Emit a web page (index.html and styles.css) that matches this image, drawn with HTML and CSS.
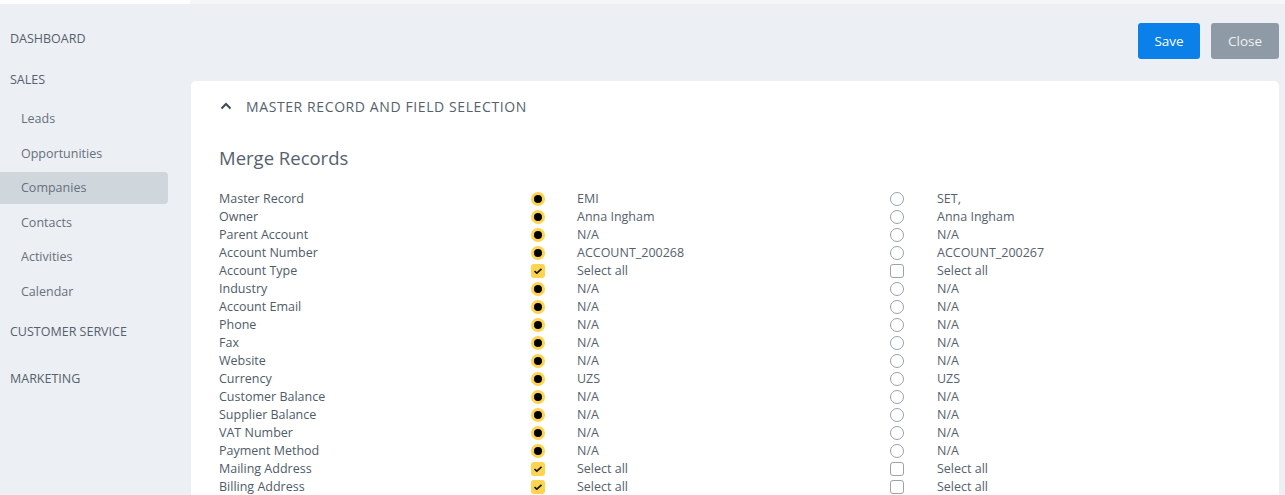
FILE: index.html
```html
<!DOCTYPE html>
<html>
<head>
<meta charset="utf-8">
<link rel="stylesheet" href="styles.css">
</head>
<body>
<div class="strip"><div class="strip-left"></div><div class="strip-right"></div></div>
<div class="layout">
  <nav class="sidebar">
    <div class="nav-head">DASHBOARD</div>
    <div class="nav-head">SALES</div>
    <div class="nav-sub">
      <div class="nav-item">Leads</div>
      <div class="nav-item">Opportunities</div>
      <div class="nav-item active">Companies</div>
      <div class="nav-item">Contacts</div>
      <div class="nav-item">Activities</div>
      <div class="nav-item">Calendar</div>
    </div>
    <div class="nav-head cs">CUSTOMER SERVICE</div>
    <div class="nav-head mk">MARKETING</div>
  </nav>
  <main class="main">
    <div class="actions">
      <button class="btn btn-save">Save</button>
      <button class="btn btn-close">Close</button>
    </div>
    <section class="card">
      <div class="section-head">
        <svg class="chev" width="12" height="8" viewBox="0 0 12 8"><path d="M1.5 6.5 L6 2 L10.5 6.5" fill="none" stroke="#3e4a57" stroke-width="2"/></svg>
        <span>MASTER RECORD AND FIELD SELECTION</span>
      </div>
      <h2 class="title">Merge Records</h2>
      <div class="grid">
        <div class="lbl">Master Record</div><div class="cell"><span class="radio on"></span></div><div class="val">EMI</div><div class="cell"><span class="radio"></span></div><div class="val">SET,</div>
        <div class="lbl">Owner</div><div class="cell"><span class="radio on"></span></div><div class="val">Anna Ingham</div><div class="cell"><span class="radio"></span></div><div class="val">Anna Ingham</div>
        <div class="lbl">Parent Account</div><div class="cell"><span class="radio on"></span></div><div class="val">N/A</div><div class="cell"><span class="radio"></span></div><div class="val">N/A</div>
        <div class="lbl">Account Number</div><div class="cell"><span class="radio on"></span></div><div class="val">ACCOUNT_200268</div><div class="cell"><span class="radio"></span></div><div class="val">ACCOUNT_200267</div>
        <div class="lbl">Account Type</div><div class="cell"><span class="check on"><svg width="10" height="8" viewBox="0 0 10 8"><path d="M1.5 4.2 L3.8 6.2 L8.5 1.8" fill="none" stroke="#111" stroke-width="1.6"/></svg></span></div><div class="val">Select all</div><div class="cell"><span class="check"></span></div><div class="val">Select all</div>
        <div class="lbl">Industry</div><div class="cell"><span class="radio on"></span></div><div class="val">N/A</div><div class="cell"><span class="radio"></span></div><div class="val">N/A</div>
        <div class="lbl">Account Email</div><div class="cell"><span class="radio on"></span></div><div class="val">N/A</div><div class="cell"><span class="radio"></span></div><div class="val">N/A</div>
        <div class="lbl">Phone</div><div class="cell"><span class="radio on"></span></div><div class="val">N/A</div><div class="cell"><span class="radio"></span></div><div class="val">N/A</div>
        <div class="lbl">Fax</div><div class="cell"><span class="radio on"></span></div><div class="val">N/A</div><div class="cell"><span class="radio"></span></div><div class="val">N/A</div>
        <div class="lbl">Website</div><div class="cell"><span class="radio on"></span></div><div class="val">N/A</div><div class="cell"><span class="radio"></span></div><div class="val">N/A</div>
        <div class="lbl">Currency</div><div class="cell"><span class="radio on"></span></div><div class="val">UZS</div><div class="cell"><span class="radio"></span></div><div class="val">UZS</div>
        <div class="lbl">Customer Balance</div><div class="cell"><span class="radio on"></span></div><div class="val">N/A</div><div class="cell"><span class="radio"></span></div><div class="val">N/A</div>
        <div class="lbl">Supplier Balance</div><div class="cell"><span class="radio on"></span></div><div class="val">N/A</div><div class="cell"><span class="radio"></span></div><div class="val">N/A</div>
        <div class="lbl">VAT Number</div><div class="cell"><span class="radio on"></span></div><div class="val">N/A</div><div class="cell"><span class="radio"></span></div><div class="val">N/A</div>
        <div class="lbl">Payment Method</div><div class="cell"><span class="radio on"></span></div><div class="val">N/A</div><div class="cell"><span class="radio"></span></div><div class="val">N/A</div>
        <div class="lbl">Mailing Address</div><div class="cell"><span class="check on"><svg width="10" height="8" viewBox="0 0 10 8"><path d="M1.5 4.2 L3.8 6.2 L8.5 1.8" fill="none" stroke="#111" stroke-width="1.6"/></svg></span></div><div class="val">Select all</div><div class="cell"><span class="check"></span></div><div class="val">Select all</div>
        <div class="lbl">Billing Address</div><div class="cell"><span class="check on"><svg width="10" height="8" viewBox="0 0 10 8"><path d="M1.5 4.2 L3.8 6.2 L8.5 1.8" fill="none" stroke="#111" stroke-width="1.6"/></svg></span></div><div class="val">Select all</div><div class="cell"><span class="check"></span></div><div class="val">Select all</div>
      </div>
    </section>
  </main>
</div>
</body>
</html>
```

FILE: styles.css
```css
* { box-sizing: border-box; }
html, body { margin: 0; padding: 0; }
body {
  width: 1285px;
  height: 495px;
  overflow: hidden;
  background: #eceff3;
  font-family: "Open Sans", "Noto Sans", sans-serif;
  color: #505b68;
}
.strip { display: flex; height: 4px; }
.strip-left { width: 190px; background: #ffffff; }
.strip-right { flex: 1; background: #f5f6f8; }
.layout { display: flex; }
.sidebar {
  width: 191px;
  flex: none;
  padding-top: 14px;
  padding-right: 23px;
}
.nav-head {
  height: 41px;
  line-height: 41px;
  padding-left: 10px;
  font-size: 12.5px;
  color: #56616d;
}
.nav-head.cs { margin-top: 3.5px; }
.nav-head.mk { margin-top: 6px; }
.nav-sub { padding-top: 3px; }
.nav-item {
  height: 32px;
  line-height: 32px;
  margin-bottom: 2.5px;
  padding-left: 21px;
  font-size: 12.5px;
  color: #66717c;
}
.nav-item.active {
  background: #cfd6dc;
  border-radius: 0 4px 4px 0;
}
.main { flex: 1; padding-right: 6px; }
.actions {
  display: flex;
  justify-content: flex-end;
  gap: 11px;
  padding-top: 19px;
  margin-bottom: 22px;
}
.btn {
  height: 36px;
  border: none;
  border-radius: 3px;
  color: #ffffff;
  font-family: "Open Sans", "Noto Sans", sans-serif;
  font-size: 13.5px;
  padding: 0;
}
.btn-save { width: 62px; background: #0a80e8; }
.btn-close { width: 68px; background: #8e9aa5; color: #eef1f4; }
.card {
  background: #ffffff;
  border-radius: 5px 5px 0 0;
  padding: 14px 28px 0 28px;
  height: 420px;
}
.section-head {
  display: flex;
  align-items: center;
  gap: 14px;
  height: 22px;
  font-size: 14px;
  letter-spacing: 0.6px;
  color: #56616d;
  padding-left: 1px;
}
.title {
  margin: 29px 0 0 0;
  font-size: 18.5px;
  font-weight: 400;
  line-height: 24px;
  color: #56616d;
}
.grid {
  margin-top: 20px;
  display: grid;
  grid-template-columns: 312px 46px 313px 47px 1fr;
  grid-auto-rows: 18px;
  font-size: 12.5px;
  line-height: 18px;
}
.lbl { color: #505b68; }
.val { color: #56616d; }
.cell { display: flex; align-items: center; }
.radio {
  width: 14px; height: 14px;
  border-radius: 50%;
  border: 1px solid #9aa3ab;
  background: #fff;
  display: flex; align-items: center; justify-content: center;
}
.radio.on { border: none; background: #fcd44e; }
.radio.on::after {
  content: "";
  width: 8px; height: 8px; border-radius: 50%; background: #000;
}
.check {
  width: 14px; height: 14px;
  border-radius: 3px;
  border: 1px solid #9aa3ab;
  background: #fff;
  display: flex; align-items: center; justify-content: center;
}
.check.on { border: none; background: #fcd44e; }
```
